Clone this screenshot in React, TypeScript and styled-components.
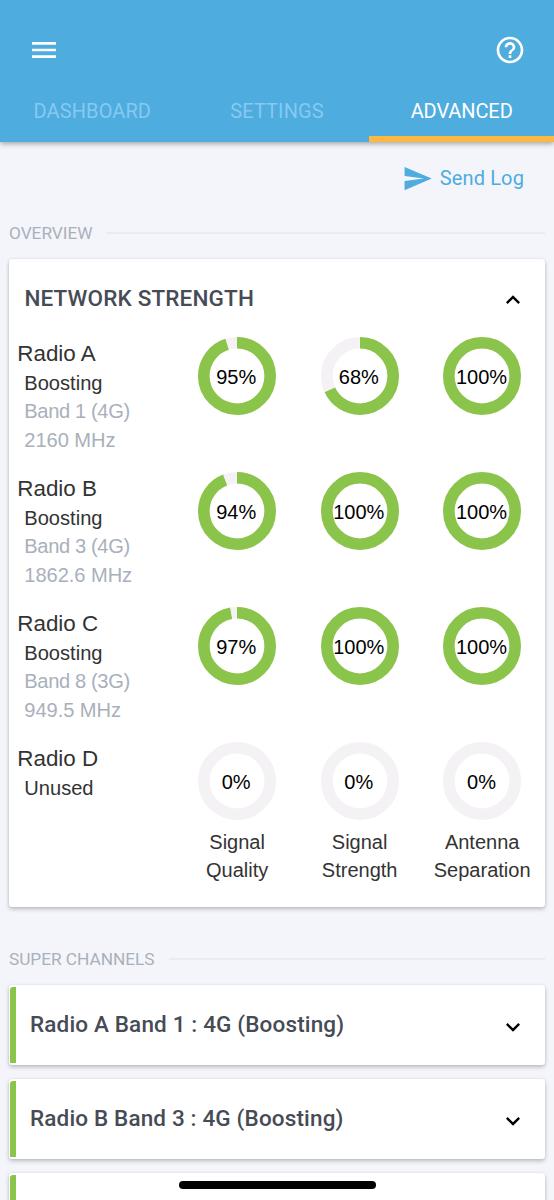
import React from "react";
import styled, { createGlobalStyle } from "styled-components";

const GlobalStyle = createGlobalStyle`
  *, *::before, *::after { box-sizing: border-box; }
  body { margin: 0; background: #f4f5fa; overflow: hidden; }
`;

const Screen = styled.main`
  position: relative;
  width: 554px;
  height: 1200px;
  overflow: hidden;
  background: #f4f5fa;
  font-family: Roboto, "Liberation Sans", sans-serif;
`;

const Header = styled.header`
  height: 142px;
  display: flex;
  flex-direction: column;
  background: #4eacdf;
  box-shadow: 0 2px 5px rgba(0, 0, 0, 0.32);
`;

const TopBar = styled.div`
  height: 82px;
  padding: 34px 28px 0;
  display: flex;
  justify-content: space-between;
  align-items: flex-start;
`;

const IconButton = styled.button`
  width: 32px;
  height: 32px;
  padding: 0;
  border: 0;
  background: none;
  color: #fff;
`;

const Icon = styled.svg<{ $size: number }>`
  display: block;
  flex: none;
  width: ${(p) => p.$size}px;
  height: ${(p) => p.$size}px;
  fill: currentColor;
`;

const Tabs = styled.nav`
  flex: 1;
  display: grid;
  grid-template-columns: repeat(3, 1fr);
`;

const Tab = styled.button<{ $active?: boolean }>`
  padding: 4px 0 0;
  border: 0;
  border-bottom: 6px solid ${(p) => (p.$active ? "#fbb944" : "transparent")};
  background: none;
  font-family: inherit;
  font-size: 20px;
  letter-spacing: ${(p) => (p.$active ? "-0.1px" : "0.1px")};
  color: ${(p) => (p.$active ? "#fff" : "#86c9f1")};
`;

const SendRow = styled.div`
  height: 74px;
  padding: 0 30px 1px 0;
  display: flex;
  justify-content: flex-end;
  align-items: center;
  gap: 7px;
  color: #4eacdf;
  font-size: 20px;
  letter-spacing: 0.12px;
`;

const SendLabel = styled.span`
  padding-bottom: 2px;
`;

const SectionLabel = styled.h2`
  height: 34px;
  margin: 0 9px 9px;
  display: flex;
  align-items: center;
  gap: 15px;
  font-size: 17.3px;
  font-weight: 400;
  letter-spacing: -0.05px;
  color: #a9b0bc;
  white-space: nowrap;

  &::after {
    content: "";
    flex: 1;
    height: 2px;
    margin-top: -1px;
    background: #e9ebef;
  }
`;

const Card = styled.section`
  margin: 0 8.6px;
  background: #fff;
  border-radius: 3px;
  box-shadow: 0 2px 4px rgba(0, 0, 0, 0.24), 0 0 2px rgba(0, 0, 0, 0.08);
`;

const OverviewCard = styled(Card)`
  height: 648px;
  margin-bottom: 35px;
`;

const CardHeader = styled.div`
  height: 78px;
  padding: 0 18.4px 0 15.8px;
  display: flex;
  align-items: center;
  justify-content: space-between;
`;

const Chevron = styled.span`
  padding-top: 3px;
`;

const CardTitle = styled.h3`
  margin: 0;
  font-size: 22.5px;
  font-weight: 500;
  letter-spacing: 0.15px;
  color: #464b55;
`;

const RadioRow = styled.div`
  height: 135px;
  padding: 0 1.6px 0 8.7px;
  display: grid;
  grid-template-columns: 158.6px repeat(3, 1fr);
  justify-items: center;
  font-family: "Liberation Sans", sans-serif;
`;

const RadioInfo = styled.div`
  justify-self: start;
  padding-top: 2px;
`;

const RadioName = styled.div`
  height: 30px;
  line-height: 30px;
  font-size: 22.4px;
  color: #333;
`;

const RadioLine = styled.div<{ $muted?: boolean; $tracking?: number }>`
  height: 28.4px;
  line-height: 28.4px;
  padding-left: 7px;
  font-size: 20.1px;
  letter-spacing: ${(p) => p.$tracking ?? 0}px;
  white-space: nowrap;
  color: ${(p) => (p.$muted ? "#a9b0bb" : "#333")};
`;

const Gauge = styled.div`
  width: 78px;
  height: 78px;
  display: grid;
  place-items: center;

  & > * { grid-area: 1 / 1; }
`;

const GaugeValue = styled.span`
  padding: 2px 2px 0 0;
  font-size: 20px;
  color: #000;
`;

const Caption = styled.div`
  margin-top: 8px;
  text-align: center;
  font-size: 20px;
  line-height: 28.4px;
  white-space: nowrap;
  color: #333;
`;

const CaptionRow = styled(RadioRow)`
  height: auto;
  margin-top: -57px;
  padding-right: 2px;
`;

const ChannelList = styled.div`
  display: flex;
  flex-direction: column;
  gap: 14px;
`;

const ChannelCard = styled(Card)`
  flex: none;
  height: 80px;
  padding: 2px 18.4px 2px 1.4px;
  display: flex;
  align-items: center;
`;

const Stripe = styled.div`
  align-self: stretch;
  width: 6px;
  margin-right: 14px;
  border-radius: 3px 0 0 0;
  background: #8bc44a;
`;

const ChannelTitle = styled(CardTitle)`
  flex: 1;
  padding-bottom: 2px;
`;

const HomeIndicator = styled.div`
  position: absolute;
  left: 179px;
  top: 1181px;
  width: 197px;
  height: 8px;
  border-radius: 4px;
  background: #000;
`;

const paths = {
  menu: "M3 18h18v-2H3v2zm0-5h18v-2H3v2zm0-7v2h18V6H3z",
  help: "M11 18h2v-2h-2v2zm1-16C6.48 2 2 6.48 2 12s4.48 10 10 10 10-4.48 10-10S17.52 2 12 2zm0 18c-4.41 0-8-3.59-8-8s3.59-8 8-8 8 3.59 8 8-3.59 8-8 8zm0-14c-2.21 0-4 1.79-4 4h2c0-1.1.9-2 2-2s2 .9 2 2c0 2-3 1.75-3 5h2c0-2.25 3-2.5 3-5 0-2.21-1.79-4-4-4z",
  send: "M2.01 21 23 12 2.01 3 2 10l15 2-15 2z",
  up: "M12 8l-6 6 1.41 1.41L12 10.83l4.59 4.58L18 14z",
  down: "M16.59 8.59 12 13.17 7.41 8.59 6 10l6 6 6-6z",
};

function Glyph({ name, size }: { name: keyof typeof paths; size: number }) {
  return (
    <Icon viewBox="0 0 24 24" $size={size} aria-hidden="true">
      <path d={paths[name]} />
    </Icon>
  );
}

function Ring({ value }: { value: number }) {
  const r = 33.2;
  const length = 2 * Math.PI * r;
  return (
    <Gauge>
      <svg width="78" height="78" viewBox="0 0 78 78" fill="none" strokeWidth="11.6">
        <circle cx="39" cy="39" r={r} stroke="#f4f2f4" />
        {value > 0 && (
          <circle
            cx="39"
            cy="39"
            r={r}
            stroke="#8bc44a"
            strokeDasharray={value < 100 ? `${(length * value) / 100} ${length}` : undefined}
            transform="rotate(-90 39 39)"
          />
        )}
      </svg>
      <GaugeValue>{value}%</GaugeValue>
    </Gauge>
  );
}

const radios = [
  { name: "Radio A", status: "Boosting", band: "Band 1 (4G)", frequency: "2160 MHz", values: [95, 68, 100] },
  { name: "Radio B", status: "Boosting", band: "Band 3 (4G)", frequency: "1862.6 MHz", values: [94, 100, 100] },
  { name: "Radio C", status: "Boosting", band: "Band 8 (3G)", frequency: "949.5 MHz", values: [97, 100, 100] },
  { name: "Radio D", status: "Unused", values: [0, 0, 0] },
];

const captions = [
  ["Signal", "Quality"],
  ["Signal", "Strength"],
  ["Antenna", "Separation"],
];

const channels = ["Radio A Band 1 : 4G (Boosting)", "Radio B Band 3 : 4G (Boosting)", ""];

export default function App() {
  return (
    <Screen>
      <GlobalStyle />
      <Header>
        <TopBar>
          <IconButton aria-label="Menu"><Glyph name="menu" size={32} /></IconButton>
          <IconButton aria-label="Help"><Glyph name="help" size={32} /></IconButton>
        </TopBar>
        <Tabs>
          <Tab>DASHBOARD</Tab>
          <Tab>SETTINGS</Tab>
          <Tab $active>ADVANCED</Tab>
        </Tabs>
      </Header>

      <SendRow>
        <Glyph name="send" size={31} />
        <SendLabel>Send Log</SendLabel>
      </SendRow>

      <SectionLabel>OVERVIEW</SectionLabel>
      <OverviewCard>
        <CardHeader>
          <CardTitle>NETWORK STRENGTH</CardTitle>
          <Chevron><Glyph name="up" size={28} /></Chevron>
        </CardHeader>
        {radios.map((radio) => (
          <RadioRow key={radio.name}>
            <RadioInfo>
              <RadioName>{radio.name}</RadioName>
              <RadioLine>{radio.status}</RadioLine>
              {radio.band && <RadioLine $muted $tracking={-0.36}>{radio.band}</RadioLine>}
              {radio.frequency && <RadioLine $muted $tracking={-0.05}>{radio.frequency}</RadioLine>}
            </RadioInfo>
            {radio.values.map((v, i) => (
              <Ring key={i} value={v} />
            ))}
          </RadioRow>
        ))}
        <CaptionRow>
          <span />
          {captions.map(([a, b]) => (
            <Caption key={b}>{a}<br />{b}</Caption>
          ))}
        </CaptionRow>
      </OverviewCard>

      <SectionLabel>SUPER CHANNELS</SectionLabel>
      <ChannelList>
        {channels.map((title, i) => (
          <ChannelCard key={i}>
            <Stripe />
            <ChannelTitle>{title}</ChannelTitle>
            <Chevron><Glyph name="down" size={28} /></Chevron>
          </ChannelCard>
        ))}
      </ChannelList>
      <HomeIndicator />
    </Screen>
  );
}
